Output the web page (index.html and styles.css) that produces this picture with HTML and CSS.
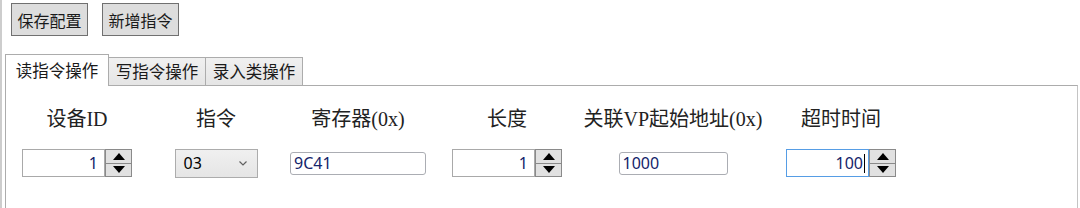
FILE: index.html
```html
<!DOCTYPE html>
<html lang="zh-CN">
<head>
    <meta charset="UTF-8">
    <title>指令配置</title>
    <link rel="stylesheet" href="styles.css">
</head>
<body>
    <div class="window">
        <div class="toolbar">
            <button class="btn">保存配置</button>
            <button class="btn">新增指令</button>
        </div>

        <div class="tabs">
            <div class="tab-strip">
                <div class="tab active">读指令操作</div>
                <div class="tab">写指令操作</div>
                <div class="tab">录入类操作</div>
            </div>
            <div class="panel">
                <div class="label">设备ID</div>
                <div class="label">指令</div>
                <div class="label">寄存器(0x)</div>
                <div class="label">长度</div>
                <div class="label">关联VP起始地址(0x)</div>
                <div class="label">超时时间</div>

                <div class="cell">
                    <div class="spin">
                        <input class="spin-input" value="1">
                        <div class="spin-btns">
                            <div class="spin-btn"><svg width="12" height="7" viewBox="0 0 12 7"><polygon points="0,7 12,7 6,0" fill="#000"/></svg></div>
                            <div class="spin-btn"><svg width="12" height="7" viewBox="0 0 12 7"><polygon points="0,0 12,0 6,7" fill="#000"/></svg></div>
                        </div>
                    </div>
                </div>
                <div class="cell">
                    <div class="combo">
                        <span>03</span>
                        <svg width="8" height="5" viewBox="0 0 8 5"><polyline points="0.5,0.5 4,4 7.5,0.5" fill="none" stroke="#606060" stroke-width="1.2"/></svg>
                    </div>
                </div>
                <div class="cell">
                    <input class="textbox wide" value="9C41">
                </div>
                <div class="cell">
                    <div class="spin">
                        <input class="spin-input" value="1">
                        <div class="spin-btns">
                            <div class="spin-btn"><svg width="12" height="7" viewBox="0 0 12 7"><polygon points="0,7 12,7 6,0" fill="#000"/></svg></div>
                            <div class="spin-btn"><svg width="12" height="7" viewBox="0 0 12 7"><polygon points="0,0 12,0 6,7" fill="#000"/></svg></div>
                        </div>
                    </div>
                </div>
                <div class="cell">
                    <input class="textbox" value="1000">
                </div>
                <div class="cell">
                    <div class="spin">
                        <div class="spin-input focused">100<span class="caret"></span></div>
                        <div class="spin-btns">
                            <div class="spin-btn"><svg width="12" height="7" viewBox="0 0 12 7"><polygon points="0,7 12,7 6,0" fill="#000"/></svg></div>
                            <div class="spin-btn"><svg width="12" height="7" viewBox="0 0 12 7"><polygon points="0,0 12,0 6,7" fill="#000"/></svg></div>
                        </div>
                    </div>
                </div>
            </div>
        </div>
    </div>
</body>
</html>
```

FILE: styles.css
```css
body {
    margin: 0;
    padding: 0;
    background-color: #fff;
    font-family: "Noto Sans", "Noto Sans CJK SC", sans-serif;
    overflow: hidden;
}

.window {
    border-left: 2px solid #cdcdcd;
    height: 208px;
    box-sizing: border-box;
    overflow: hidden;
}

.toolbar {
    display: flex;
    gap: 14px;
    padding: 3px 0 0 9px;
}

.btn {
    width: 77px;
    height: 33px;
    padding: 0;
    border: 1px solid #707070;
    background-color: #dddddd;
    color: #1a1a1a;
    font-family: "Noto Sans CJK SC", sans-serif;
    font-size: 16px;
}

.tabs {
    margin: 18px 2px 0 3px;
}

.tab-strip {
    display: flex;
    align-items: flex-end;
    height: 31px;
}

.tab {
    position: relative;
    width: 98px;
    height: 28px;
    box-sizing: border-box;
    margin-left: -1px;
    border: 1px solid #acacac;
    border-bottom: none;
    background: linear-gradient(#f0f0f0, #e5e5e5);
    color: #1a1a1a;
    font-family: "Noto Sans CJK SC", sans-serif;
    font-size: 16.5px;
    line-height: 26px;
    text-align: center;
}

.tab.active {
    z-index: 1;
    width: 104px;
    height: 32px;
    margin-left: 0;
    margin-bottom: -1px;
    background: #fff;
    line-height: 31px;
}

.panel {
    display: grid;
    grid-template-columns: 142px 136px 148px 150px 182px 154px;
    grid-template-rows: 24px 28px;
    row-gap: 18px;
    align-content: start;
    height: 123px;
    box-sizing: border-box;
    padding-top: 21px;
    border: 1px solid #acacac;
    border-right-color: #c4c4c4;
    border-bottom: none;
}

.label {
    font-family: "Liberation Serif", "Noto Sans CJK SC", serif;
    font-size: 20px;
    line-height: 24px;
    color: #222;
    text-align: center;
}

.cell {
    display: flex;
    justify-content: center;
    align-items: center;
}

.spin {
    display: flex;
    height: 28px;
}

.spin-input {
    width: 83px;
    height: 28px;
    box-sizing: border-box;
    border: 1px solid #a9a9a9;
    padding: 0 6px 0 0;
    outline: none;
    text-align: right;
    font-family: "Noto Sans", sans-serif;
    font-size: 16px;
    color: #14246a;
}

.spin-input.focused {
    display: flex;
    align-items: center;
    justify-content: flex-end;
    padding-right: 3px;
    border-color: #569de5;
    line-height: 26px;
}

.caret {
    width: 1px;
    height: 19px;
    margin-left: 1px;
    background-color: #000;
}

.spin-btns {
    display: flex;
    flex-direction: column;
    width: 27px;
    box-sizing: border-box;
    border: 1px solid #8a8a8a;
    border-left: none;
}

.spin-btn {
    flex: 1;
    display: flex;
    justify-content: center;
    align-items: center;
    background-color: #e1e1e1;
    border-left: 1px solid #8a8a8a;
}

.spin-btn + .spin-btn {
    border-top: 1px solid #8a8a8a;
}

.combo {
    display: flex;
    justify-content: space-between;
    align-items: center;
    width: 83px;
    height: 29px;
    box-sizing: border-box;
    padding: 0 10px 0 8px;
    border: 1px solid #acacac;
    background: linear-gradient(#f0f0f0, #e5e5e5);
    font-size: 16px;
    color: #000;
}

.textbox {
    width: 109px;
    height: 23px;
    box-sizing: border-box;
    padding: 0 3px;
    border: 1px solid #abadb3;
    border-radius: 3px;
    outline: none;
    font-family: "Noto Sans", sans-serif;
    font-size: 16px;
    color: #14246a;
}

.textbox.wide {
    width: 136px;
}
```
